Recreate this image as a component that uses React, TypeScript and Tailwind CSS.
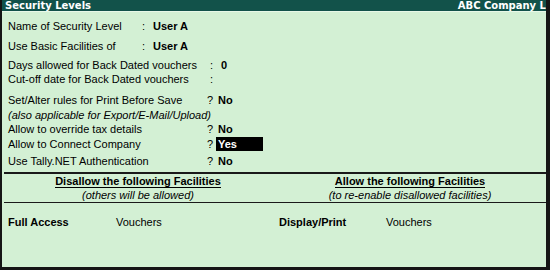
import React from "react";

const F = { fontFamily: '"Liberation Sans", Arial, sans-serif' };

function Row({ label, sep, value, labelW, mt, highlight }: { label: string; sep: string; value?: string; labelW: string; mt: string; highlight?: boolean }) {
  return (
    <div className={`flex h-[14px] items-center whitespace-nowrap leading-[14px] ${mt}`}>
      <div className={`${labelW} shrink-0`}>{label}</div>
      <div className="w-[8px] shrink-0">{sep}</div>
      {highlight ? (
        <div className="ml-[1px] h-[14px] w-[47px] bg-black pl-[2px] font-bold text-white">{value}</div>
      ) : (
        <div className="ml-[3px] font-bold">{value}</div>
      )}
    </div>
  );
}

export default function App() {
  return (
    <div className="h-[270px] w-[550px] bg-[#151515] pb-[3px] pl-[2px] pr-[4px] text-[11px] text-black" style={F}>
      <div className="flex h-full flex-col bg-[#d3f0d4]">
        <div className="flex h-[11px] items-center justify-between overflow-hidden bg-[#12524a] pl-[3px] text-[10px] font-bold leading-[11px] text-white" style={{ fontFamily: '"DejaVu Sans", Verdana, sans-serif' }}>
          <span>Security Levels</span>
          <span className="whitespace-nowrap">ABC Company L</span>
        </div>
        <div className="h-[1px] bg-[#e8f8e8]" />
        <div className="pl-[6px]">
          <Row label="Name of Security Level" sep=":" value="User A" labelW="w-[134px]" mt="mt-[7px]" />
          <Row label="Use Basic Facilities of" sep=":" value="User A" labelW="w-[134px]" mt="mt-[6px]" />
          <Row label="Days allowed for Back Dated vouchers" sep=":" value="0" labelW="w-[202px]" mt="mt-[5px]" />
          <Row label="Cut-off date for Back Dated vouchers" sep=":" labelW="w-[202px]" mt="mt-0" />
          <Row label="Set/Alter rules for Print Before Save" sep="?" value="No" labelW="w-[199px]" mt="mt-[7px]" />
          <div className="mt-[1px] h-[14px] whitespace-nowrap leading-[14px] italic">(also applicable for Export/E-Mail/Upload)</div>
          <Row label="Allow to override tax details" sep="?" value="No" labelW="w-[199px]" mt="mt-0" />
          <Row label="Allow to Connect Company" sep="?" value="Yes" labelW="w-[199px]" mt="mt-[1px]" highlight />
          <Row label="Use Tally.NET Authentication" sep="?" value="No" labelW="w-[199px]" mt="mt-[3px]" />
        </div>
        <div className="mt-[4px] ml-[2px] h-[2px] bg-[#1a1a1a]" />
        <div className="flex">
          <div className="flex-1">
            <div className="text-center font-bold leading-[14px]"><span className="border-b border-black">Disallow the following Facilities</span></div>
            <div className="text-center italic leading-[14px]">(others will be allowed)</div>
          </div>
          <div className="flex-1">
            <div className="text-center font-bold leading-[14px]"><span className="border-b border-black">Allow the following Facilities</span></div>
            <div className="text-center italic leading-[14px]">(to re-enable disallowed facilities)</div>
          </div>
        </div>
        <div className="ml-[2px] h-[1px] bg-[#1a1a1a]" />
        <div className="mt-[12px] flex leading-[14px]">
          <div className="flex w-[271px] pl-[6px]">
            <div className="w-[108px] font-bold">Full Access</div>
            <div>Vouchers</div>
          </div>
          <div className="flex pl-[6px]">
            <div className="w-[107px] font-bold">Display/Print</div>
            <div>Vouchers</div>
          </div>
        </div>
      </div>
    </div>
  );
}
